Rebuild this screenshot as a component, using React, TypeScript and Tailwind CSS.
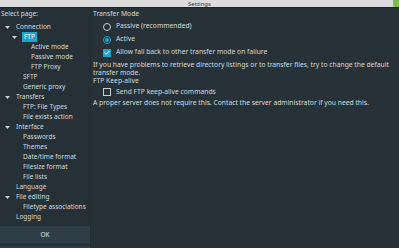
import React from "react"

type Node = { label: string; level: number; arrow?: boolean; selected?: boolean }

const tree: Node[] = [
  { label: "Connection", level: 0, arrow: true },
  { label: "FTP", level: 1, arrow: true, selected: true },
  { label: "Active mode", level: 2 },
  { label: "Passive mode", level: 2 },
  { label: "FTP Proxy", level: 2 },
  { label: "SFTP", level: 1 },
  { label: "Generic proxy", level: 1 },
  { label: "Transfers", level: 0, arrow: true },
  { label: "FTP: File Types", level: 1 },
  { label: "File exists action", level: 1 },
  { label: "Interface", level: 0, arrow: true },
  { label: "Passwords", level: 1 },
  { label: "Themes", level: 1 },
  { label: "Date/time format", level: 1 },
  { label: "Filesize format", level: 1 },
  { label: "File lists", level: 1 },
  { label: "Language", level: 0 },
  { label: "File editing", level: 0, arrow: true },
  { label: "Filetype associations", level: 1 },
  { label: "Logging", level: 0 },
]

const indent = ["pl-[16px]", "pl-[23px]", "pl-[31px]"]
const arrowPos = ["left-[5px]", "left-[12px]", "left-[19px]"]

function Arrow({ level }: { level: number }) {
  return (
    <svg
      className={`absolute top-[4px] ${arrowPos[level]}`}
      width="5"
      height="3"
      viewBox="0 0 5 3"
    >
      <path d="M0 0 H5 L2.5 3 Z" fill="#c8d0d4" />
    </svg>
  )
}

function TreeRow({ node }: { node: Node }) {
  return (
    <div className={`relative flex h-[10px] items-center ${indent[node.level]}`}>
      {node.arrow && <Arrow level={node.level} />}
      {node.selected ? (
        <span className="-ml-[1px] bg-[#22a3c9] px-[2px] leading-[10px] text-white">
          {node.label}
        </span>
      ) : (
        <span>{node.label}</span>
      )}
    </div>
  )
}

function Radio({ checked, label }: { checked?: boolean; label: string }) {
  return (
    <div className="flex h-[13px] items-center pl-[10px]">
      <span
        className={`flex h-[8px] w-[8px] items-center justify-center rounded-full border ${
          checked ? "border-[#22a3c9]" : "border-[#c8d0d4]"
        }`}
      >
        {checked && <span className="h-[4px] w-[4px] rounded-full bg-[#22a3c9]" />}
      </span>
      <span className="ml-[5px]">{label}</span>
    </div>
  )
}

function Check({ checked, label, h = "h-[13px]" }: { checked?: boolean; label: string; h?: string }) {
  return (
    <div className={`flex items-center pl-[10px] ${h}`}>
      {checked ? (
        <span className="flex h-[8px] w-[8px] items-center justify-center bg-[#22a3c9]">
          <svg width="6" height="5" viewBox="0 0 6 5">
            <path d="M0.6 2.6 L2.3 4.1 L5.4 0.8" stroke="white" strokeWidth="1" fill="none" />
          </svg>
        </span>
      ) : (
        <span className="h-[8px] w-[8px] border border-[#c8d0d4]" />
      )}
      <span className="ml-[5px]">{label}</span>
    </div>
  )
}

export default function App() {
  return (
    <div
      className="flex h-[248px] w-[399px] flex-col overflow-hidden bg-[#263238] text-[6.5px] text-[#d3dadd]"
      style={{ fontFamily: '"Noto Sans", sans-serif' }}
    >
      <div className="relative flex h-[8px] shrink-0 items-center justify-center border-b border-[#1c2429] bg-[#dcdcdc]">
        <span className="text-[6px] leading-none text-[#3a3a3a]">Settings</span>
        <span className="absolute right-0 top-0 h-[7px] w-[6px] rounded-bl-[2px] bg-[#7dbb4a]" />
      </div>

      <div className="flex min-h-0 flex-1">
        <div className="flex w-[91px] shrink-0 flex-col border-r border-[#222c31] bg-[#253137]">
          <div className="flex h-[12px] items-center pl-[1px]">Select page:</div>
          <div className="mt-[2px] flex-1">
            {tree.map((n) => (
              <TreeRow key={n.label} node={n} />
            ))}
          </div>
          <div className="flex h-[17px] items-center justify-center bg-[#2f3e46] text-[#dde3e6]">OK</div>
          <div className="mt-[3px] h-[2px] bg-[#2f3e46]" />
        </div>

        <div className="flex-1 pl-[2px] pt-[1px] text-[6.75px]">
          <div className="flex h-[11px] items-center">Transfer Mode</div>
          <Radio label="Passive (recommended)" />
          <Radio checked label="Active" />
          <Check checked label="Allow fall back to other transfer mode on failure" />
          <p className="mt-[2px] leading-[8px]">
            If you have problems to retrieve directory listings or to transfer files, try to change the default
            transfer mode.
          </p>
          <div className="flex h-[9px] items-center">FTP Keep-alive</div>
          <Check label="Send FTP keep-alive commands" h="h-[12px]" />
          <div className="flex h-[11px] items-center">
            A proper server does not require this. Contact the server administrator if you need this.
          </div>
        </div>
      </div>
    </div>
  )
}
